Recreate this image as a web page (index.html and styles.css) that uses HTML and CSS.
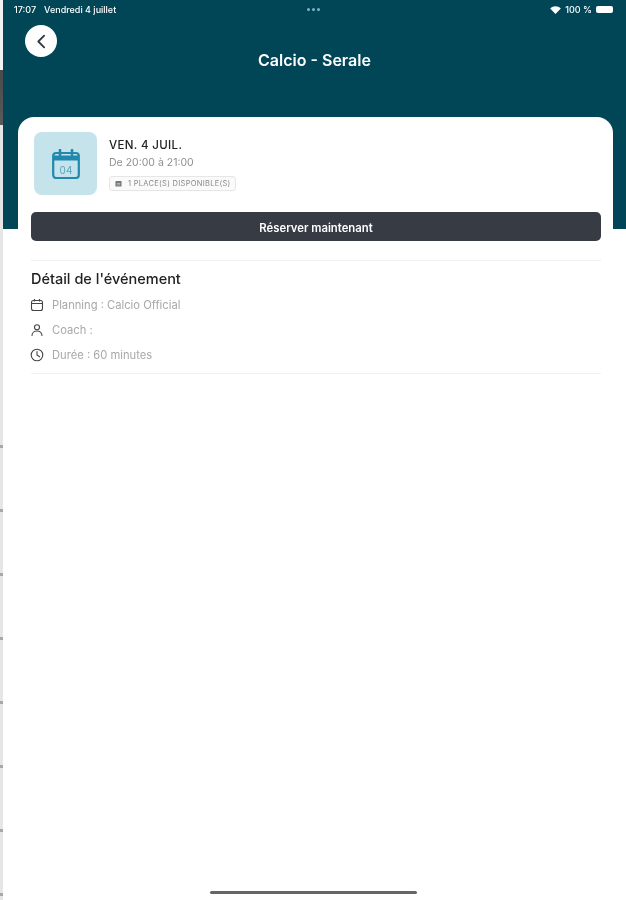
FILE: index.html
```html
<!DOCTYPE html>
<html lang="fr">

<head>
    <meta charset="UTF-8">
    <meta name="viewport" content="width=device-width, initial-scale=1.0">
    <title>Calcio - Serale</title>
    <link rel="stylesheet" href="styles.css">
</head>

<body>
    <div class="edge"></div>

    <div class="screen">
        <div class="status-bar">
            <div class="status-left">
                <span>17:07</span>
                <span>Vendredi 4 juillet</span>
            </div>
            <div class="status-dots"><i></i><i></i><i></i></div>
            <div class="status-right">
                <svg class="wifi" viewBox="0 0 12 9" width="11" height="8">
                    <path d="M6 9 0 2.8C3.4-.6 8.6-.6 12 2.8z" fill="#fff" />
                </svg>
                <span>100 %</span>
                <div class="battery"></div>
            </div>
        </div>

        <header class="top-bar">
            <a class="back" href="#">
                <svg viewBox="0 0 16 16" width="17" height="17">
                    <path d="M10.5 2.5 5 8l5.5 5.5" fill="none" stroke="#2f3a44" stroke-width="1.7" stroke-linecap="round" stroke-linejoin="round" />
                </svg>
            </a>
            <h1>Calcio - Serale</h1>
        </header>

        <main class="card">
            <div class="event">
                <div class="thumb">
                    <svg viewBox="0 0 28 30" width="28" height="30">
                        <rect x="1.2" y="4" width="25.6" height="25" rx="3" fill="none" stroke="#2189ad" stroke-width="2.2" />
                        <path d="M1.2 9h25.6" stroke="#2189ad" stroke-width="5" />
                        <path d="M8 1v5M20 1v5" stroke="#2189ad" stroke-width="2.6" stroke-linecap="round" />
                        <text x="14" y="24.5" text-anchor="middle" class="thumb-day">04</text>
                    </svg>
                </div>
                <div class="event-info">
                    <div class="event-date">VEN. 4 JUIL.</div>
                    <div class="event-time">De 20:00 à 21:00</div>
                    <div class="places">
                        <svg viewBox="0 0 8 8" width="7" height="7">
                            <rect x="0.5" y="1" width="7" height="6.5" rx="1" fill="#777" />
                            <path d="M2 4h4M2 5.6h4" stroke="#ddd" stroke-width="0.7" />
                        </svg>
                        <span>1 PLACE(S) DISPONIBLE(S)</span>
                    </div>
                </div>
            </div>

            <button class="book">Réserver maintenant</button>

            <section class="details">
                <h2>Détail de l'événement</h2>
                <div class="detail-row">
                    <svg viewBox="0 0 14 14" width="14" height="14">
                        <rect x="1.5" y="2.5" width="11" height="10" rx="2" fill="none" stroke="#444" stroke-width="1.1" />
                        <path d="M1.5 5.5h11M4.5 1v2.5M9.5 1v2.5" fill="none" stroke="#444" stroke-width="1.1" />
                    </svg>
                    <span>Planning : Calcio Official</span>
                </div>
                <div class="detail-row">
                    <svg viewBox="0 0 14 14" width="14" height="14">
                        <circle cx="7" cy="4.2" r="2.5" fill="none" stroke="#444" stroke-width="1.1" />
                        <path d="M2 12.5c0-6 10-6 10 0" fill="none" stroke="#444" stroke-width="1.1" stroke-linecap="round" />
                    </svg>
                    <span>Coach :</span>
                </div>
                <div class="detail-row">
                    <svg viewBox="0 0 14 14" width="14" height="14">
                        <circle cx="7" cy="7" r="5.8" fill="none" stroke="#444" stroke-width="1.1" />
                        <path d="M7 3.5V7l2.6 1.8" fill="none" stroke="#444" stroke-width="1.1" stroke-linecap="round" />
                    </svg>
                    <span>Durée : 60 minutes</span>
                </div>
            </section>
        </main>

        <div class="home-indicator"></div>
    </div>
</body>

</html>
```

FILE: styles.css
```css
body {
    font-family: 'Inter', 'Liberation Sans', sans-serif;
    margin: 0;
    padding: 0;
    display: flex;
    height: 900px;
    overflow: hidden;
    background-color: #fff;
}

.edge {
    width: 3px;
    flex-shrink: 0;
    background:
        linear-gradient(#f2f2f2 70px, #4a4a4a 70px, #5a5a5a 125px, #e6e6e6 125px) top / 3px 400px no-repeat,
        repeating-linear-gradient(#e6e6e6 0, #e6e6e6 61px, #a8a8a8 61px, #a8a8a8 64px);
}

.screen {
    flex: 1;
    min-width: 0;
    display: flex;
    flex-direction: column;
    background: linear-gradient(#014657 229px, #fff 229px);
    filter: blur(0.35px);
}

/* status bar */

.status-bar {
    height: 19px;
    padding: 0 13px 0 11px;
    display: flex;
    align-items: center;
    justify-content: space-between;
    color: #fff;
    font-size: 9px;
    font-weight: 500;
}

.status-left {
    display: flex;
    gap: 8px;
    width: 200px;
}

.status-dots {
    display: flex;
    gap: 2px;
}

.status-dots i {
    width: 3px;
    height: 3px;
    border-radius: 50%;
    background-color: #7fb4c2;
}

.status-right {
    width: 200px;
    display: flex;
    justify-content: flex-end;
    align-items: center;
    gap: 4px;
}

.battery {
    width: 17px;
    height: 7px;
    border-radius: 2px;
    background-color: #fff;
}

/* header */

.top-bar {
    height: 98px;
    position: relative;
    display: flex;
    justify-content: center;
}

.top-bar h1 {
    margin: 32px 0 0;
    color: #fff;
    font-size: 16px;
    font-weight: 600;
    line-height: 18px;
    height: 18px;
}

.back {
    position: absolute;
    left: 22px;
    top: 6px;
    width: 32px;
    height: 32px;
    border-radius: 50%;
    background-color: #fff;
    display: flex;
    align-items: center;
    justify-content: center;
}

/* card */

.card {
    margin: 0 13px 0 15px;
    padding: 15px 12px 0 13px;
    background-color: #fff;
    border-radius: 16px 16px 0 0;
    flex: 1;
}

.event {
    display: flex;
    gap: 12px;
    padding-left: 3px;
}

.thumb {
    width: 63px;
    height: 63px;
    border-radius: 8px;
    background-color: #c4e3ea;
    display: flex;
    align-items: center;
    justify-content: center;
}

.thumb-day {
    font-size: 10px;
    fill: #5aa4bd;
}

.event-info {
    padding-top: 6px;
}

.event-date {
    font-size: 11.5px;
    font-weight: 500;
    line-height: 14px;
    color: #222;
    letter-spacing: 0.35px;
}

.event-time {
    margin-top: 4px;
    font-size: 10.5px;
    line-height: 14px;
    color: #8f8f8f;
}

.places {
    margin-top: 6px;
    height: 15px;
    width: 127px;
    box-sizing: border-box;
    padding: 0 0 0 5px;
    display: flex;
    align-items: center;
    gap: 6px;
    border: 1px solid #e6e6e6;
    border-radius: 3px;
    background-color: #fafafa;
    font-size: 7.5px;
    letter-spacing: 0.28px;
    color: #888;
    white-space: nowrap;
}

.places svg {
    flex-shrink: 0;
}

.book {
    display: block;
    width: 100%;
    height: 29px;
    margin-top: 17px;
    padding: 2px 0 0;
    border: none;
    border-radius: 5px;
    background-color: #373b44;
    color: #fff;
    font-family: inherit;
    font-size: 11.3px;
    font-weight: 600;
}

.details {
    margin-top: 19px;
    padding: 9px 0 6px;
    border-top: 1px solid #f1f1f1;
    border-bottom: 1px solid #f1f1f1;
}

.details h2 {
    margin: 0 0 5px;
    font-size: 14.5px;
    font-weight: 500;
    line-height: 17px;
    color: #222;
}

.detail-row {
    height: 25px;
    margin-left: -1px;
    display: flex;
    align-items: center;
    gap: 8px;
    font-size: 11.2px;
    color: #a8a8a8;
}

.home-indicator {
    width: 207px;
    height: 3px;
    flex-shrink: 0;
    margin: 0 0 6px 207px;
    border-radius: 2px;
    background-color: #666;
}
```
